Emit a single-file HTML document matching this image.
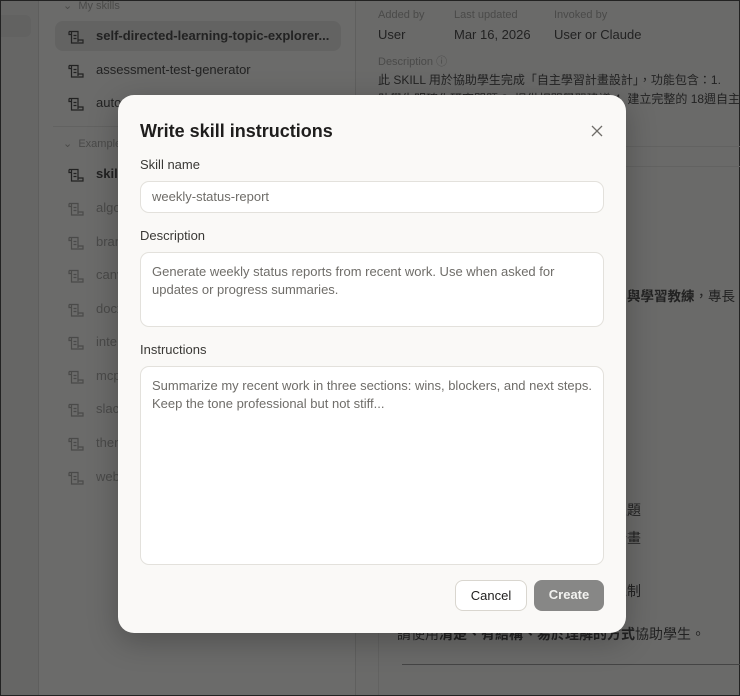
<!DOCTYPE html>
<html style="overflow:hidden;width:740px;height:696px"><head><meta charset="utf-8"><style>
*{box-sizing:border-box;margin:0;padding:0}
body{width:740px;height:696px;overflow:hidden;position:relative;background:#6a6a69;font-family:"Liberation Sans","Noto Sans CJK TC",sans-serif;border:1px solid #222}
.abs{position:absolute;white-space:nowrap}
.rail{left:0;top:0;width:38px;height:694px;background:#666665;border-right:1px solid #5e5e5d}
.side{left:38px;top:0;width:317px;height:694px;background:#6b6b6a;border-right:1px solid #5f5f5e}
.item{left:54px;height:30px;width:286px;font-size:13px;line-height:30px;color:#222}
.item .ic{position:absolute;left:12px;top:7px}
.item span{position:absolute;left:41px}
.ex{color:#4a4a49}
.sel{background:#636362;border-radius:8px;font-weight:bold}
.hdr{font-size:11px;color:#4a4a49}
.lbl{font-size:11px;color:#4a4a49}
.val{font-size:13px;color:#222}
.modal{left:117px;top:94px;width:508px;height:538px;background:#faf9f7;border-radius:16px;box-shadow:0 8px 30px rgba(0,0,0,.25)}
.modal h1{position:absolute;left:22px;top:26px;font-size:18px;font-weight:600;color:#1f1e1d}
.f{position:absolute;left:22px;font-size:13px;color:#3a3936}
.in{position:absolute;left:22px;width:464px;background:#fff;border:1px solid #e3e1dc;border-radius:9px;font-size:13px;color:#6f6d69;padding:0 11px;line-height:18px}
.btn{position:absolute;top:485px;height:31px;border-radius:8px;font-size:13px;line-height:29px;text-align:center}
</style></head><body>
<div class="abs rail"></div>
<div class="abs side"></div>
<div class="abs" style="left:0;top:14px;width:30px;height:22px;background:#626261;border-radius:0 6px 6px 0"></div>
<svg width="0" height="0" style="position:absolute"><defs><g id="sc"><path d="M2 3.5h9v10.5M2 3.5v3h2.5M4.5 3.5v11.5h11.5v-3h-5M6.5 7.5h3M6.5 10.5h3" fill="none" stroke="currentColor" stroke-width="1.2"/></g></defs></svg>
<div class="abs hdr" style="left:62px;top:-2px">⌄ &nbsp;My skills</div>
<div class="abs item sel" style="top:20px"><svg class="ic" width="18" height="17" style="color:#222"><use href="#sc"/></svg><span>self-directed-learning-topic-explorer...</span></div>
<div class="abs item" style="top:54px"><svg class="ic" width="18" height="17" style="color:#222"><use href="#sc"/></svg><span>assessment-test-generator</span></div>
<div class="abs item" style="top:87px"><svg class="ic" width="18" height="17" style="color:#222"><use href="#sc"/></svg><span>auto</span></div>
<div class="abs" style="left:52px;top:125px;width:290px;border-top:1px solid #626261"></div>
<div class="abs hdr" style="left:62px;top:136px">⌄ &nbsp;Example</div>
<div class="abs item" style="top:158px;font-weight:bold"><svg class="ic" width="18" height="17" style="color:#222"><use href="#sc"/></svg><span>skill</span></div>
<div class="abs item ex" style="top:192px"><svg class="ic" width="18" height="17"><use href="#sc"/></svg><span>algo</span></div>
<div class="abs item ex" style="top:226px"><svg class="ic" width="18" height="17"><use href="#sc"/></svg><span>bran</span></div>
<div class="abs item ex" style="top:259px"><svg class="ic" width="18" height="17"><use href="#sc"/></svg><span>canv</span></div>
<div class="abs item ex" style="top:293px"><svg class="ic" width="18" height="17"><use href="#sc"/></svg><span>docx</span></div>
<div class="abs item ex" style="top:326px"><svg class="ic" width="18" height="17"><use href="#sc"/></svg><span>inte</span></div>
<div class="abs item ex" style="top:360px"><svg class="ic" width="18" height="17"><use href="#sc"/></svg><span>mcp</span></div>
<div class="abs item ex" style="top:393px"><svg class="ic" width="18" height="17"><use href="#sc"/></svg><span>slac</span></div>
<div class="abs item ex" style="top:427px"><svg class="ic" width="18" height="17"><use href="#sc"/></svg><span>ther</span></div>
<div class="abs item ex" style="top:461px"><svg class="ic" width="18" height="17"><use href="#sc"/></svg><span>web</span></div>

<div class="abs lbl" style="left:377px;top:8px">Added by</div>
<div class="abs lbl" style="left:453px;top:8px">Last updated</div>
<div class="abs lbl" style="left:553px;top:8px">Invoked by</div>
<div class="abs val" style="left:377px;top:26px">User</div>
<div class="abs val" style="left:453px;top:26px">Mar 16, 2026</div>
<div class="abs val" style="left:553px;top:26px">User or Claude</div>
<div class="abs lbl" style="left:377px;top:52px">Description ⓘ</div>
<div class="abs val" style="left:377px;top:70px;font-size:12px">此 SKILL 用於協助學生完成「自主學習計畫設計」，功能包含：1.</div>
<div class="abs val" style="left:377px;top:89px;font-size:12px">助學生明確化研究問題 3. 提供相關學習建議 4. 建立完整的 18週自主</div>
<div class="abs" style="left:377px;top:145px;width:362px;border-top:1px solid #626261"></div>
<div class="abs" style="left:377px;top:165px;width:362px;height:529px;border-left:1px solid #626261;border-top:1px solid #626261"></div>
<div class="abs val" style="left:626px;top:284px;font-weight:bold;font-size:13.5px">與學習教練<span style="font-weight:normal">，專長</span></div>
<div class="abs val" style="left:612px;top:499px;font-size:14px">主題</div>
<div class="abs val" style="left:612px;top:527px;font-size:14px">計畫</div>
<div class="abs val" style="left:612px;top:580px;font-size:14px">機制</div>
<div class="abs val" style="left:396px;top:623px;font-size:14px">請使用<b>清楚、有結構、易於理解的方式</b>協助學生。</div>
<div class="abs" style="left:401px;top:663px;width:338px;border-top:1px solid #444"></div>

<div class="abs modal">
<h1>Write skill instructions</h1>
<svg style="position:absolute;left:473px;top:30px" width="12" height="12"><path d="M1 1L11 11M11 1L1 11" stroke="#6f6d69" stroke-width="1.3"/></svg>
<div class="f" style="top:62px">Skill name</div>
<div class="in" style="top:86px;height:32px;line-height:30px">weekly-status-report</div>
<div class="f" style="top:133px">Description</div>
<div class="in" style="top:157px;height:75px;padding-top:10px">Generate weekly status reports from recent work. Use when asked for<br>updates or progress summaries.</div>
<div class="f" style="top:247px">Instructions</div>
<div class="in" style="top:271px;height:199px;padding-top:10px">Summarize my recent work in three sections: wins, blockers, and next steps.<br>Keep the tone professional but not stiff...</div>
<div class="btn" style="left:337px;width:72px;border:1px solid #d9d6cf;background:#fff;color:#1f1e1d">Cancel</div>
<div class="btn" style="left:416px;width:70px;background:#878786;color:#f2f2f0;font-weight:bold">Create</div>
</div>
</body></html>
